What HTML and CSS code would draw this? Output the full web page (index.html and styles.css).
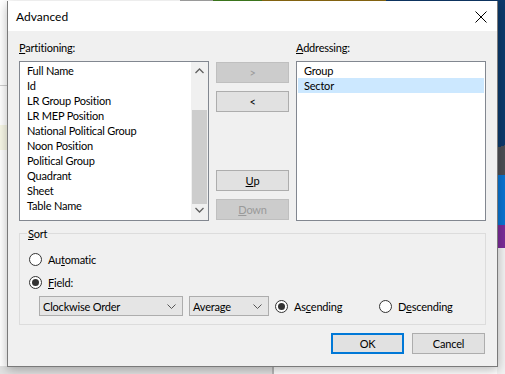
FILE: index.html
```html
<!DOCTYPE html>
<html>
<head>
<meta charset="utf-8">
<link rel="stylesheet" href="styles.css">
</head>
<body>
<div class="desktop">
  <div class="strip s-gray"></div>
  <div class="strip s-green"></div>
  <div class="strip s-gold"></div>
  <div class="strip s-navy"></div>
  <div class="side s-navy2"></div>
  <div class="side s-dark"></div>
  <div class="side s-blue"></div>
  <div class="side s-purple"></div>
  <div class="side s-light"></div>
  <div class="lline l1"></div>
  <div class="lband"></div>
  <div class="bottom-area"></div>
  <div class="bottom-line"></div>
  <div class="bottom-link">Default Table Calculation</div>

  <div class="dialog">
    <div class="titlebar">
      <span class="title">Advanced</span>
      <svg class="close" width="12" height="12" viewBox="0 0 12 12"><path d="M0.5 0.5 L11.5 11.5 M11.5 0.5 L0.5 11.5" stroke="#000" stroke-width="1" fill="none"/></svg>
    </div>
    <div class="body">
      <div class="lists">
        <div class="label"><u>P</u>artitioning:</div>
        <div></div>
        <div class="label"><u>A</u>ddressing:</div>

        <div class="listbox with-scroll">
          <div class="items">
            <div class="item">Full Name</div>
            <div class="item">Id</div>
            <div class="item">LR Group Position</div>
            <div class="item">LR MEP Position</div>
            <div class="item">National Political Group</div>
            <div class="item">Noon Position</div>
            <div class="item">Political Group</div>
            <div class="item">Quadrant</div>
            <div class="item">Sheet</div>
            <div class="item">Table Name</div>
          </div>
          <div class="scrollbar">
            <svg class="arrow" width="9" height="6" viewBox="0 0 9 6"><path d="M0.5 5 L4.5 1 L8.5 5" stroke="#606060" stroke-width="1.3" fill="none"/></svg>
            <div class="track"><div class="thumb"></div></div>
            <svg class="arrow" width="9" height="6" viewBox="0 0 9 6"><path d="M0.5 1 L4.5 5 L8.5 1" stroke="#606060" stroke-width="1.3" fill="none"/></svg>
          </div>
        </div>

        <div class="btncol">
          <div class="btn disabled">&gt;</div>
          <div class="btn">&lt;</div>
          <div class="spacer"></div>
          <div class="btn"><u>U</u>p</div>
          <div class="btn disabled"><u>D</u>own</div>
        </div>

        <div class="listbox">
          <div class="items">
            <div class="item">Group</div>
            <div class="item selected">Sector</div>
          </div>
        </div>
      </div>

      <div class="group">
        <div class="legend"><u>S</u>ort</div>
        <div class="row">
          <span class="radio"></span><span class="rlabel">Au<u>t</u>omatic</span>
        </div>
        <div class="row">
          <span class="radio checked"></span><span class="rlabel"><u>F</u>ield:</span>
        </div>
        <div class="row combos">
          <div class="combo wide"><span>Clockwise Order</span><svg width="9" height="5" viewBox="0 0 9 5"><path d="M0.5 0.5 L4.5 4.5 L8.5 0.5" stroke="#555" stroke-width="1" fill="none"/></svg></div>
          <div class="combo narrow"><span>Average</span><svg width="9" height="5" viewBox="0 0 9 5"><path d="M0.5 0.5 L4.5 4.5 L8.5 0.5" stroke="#555" stroke-width="1" fill="none"/></svg></div>
          <div class="opt asc"><span class="radio checked"></span><span class="rlabel">As<u>c</u>ending</span></div>
          <div class="opt"><span class="radio"></span><span class="rlabel">D<u>e</u>scending</span></div>
        </div>
      </div>

      <div class="footer">
        <div class="btn default">OK</div>
        <div class="btn">Cancel</div>
      </div>
    </div>
  </div>
</div>
</body>
</html>
```

FILE: styles.css
```css
html, body {
  margin: 0;
  padding: 0;
}
body {
  width: 505px;
  height: 374px;
  overflow: hidden;
  font-family: "Lato", "Noto Sans", sans-serif;
  font-size: 11px;
  letter-spacing: -0.2px;
  color: #000;
}
.desktop {
  position: relative;
  width: 505px;
  height: 374px;
  background: #ffffff;
  overflow: hidden;
}
.strip { position: absolute; top: 0; height: 1px; }
.s-gray { left: 180px; width: 33px; background: #a6a6a6; }
.s-green { left: 213px; width: 49px; background: #3f7d1f; }
.s-gold { left: 262px; width: 124px; background: #8c6a12; }
.s-navy { left: 386px; width: 119px; background: #0e3766; }
.side { position: absolute; left: 497px; width: 8px; }
.s-navy2 { top: 0; height: 135px; background: #0c3a6c; }
.s-dark { top: 135px; height: 40px; background: linear-gradient(160deg, #0c3a6c 0 30%, #4d4f55 30%); }
.s-blue { top: 175px; height: 50px; background: #0a74d2; }
.s-purple { top: 225px; height: 23px; background: #7b2c98; }
.s-light { top: 248px; height: 126px; background: #f2f2f2; }
.lline { position: absolute; left: 0; width: 7px; height: 1px; background: #cfcfcf; }
.l1 { top: 85px; }
.lband { position: absolute; left: 0; top: 125px; width: 7px; height: 25px; background: #f7f7e6; }
.bottom-area { position: absolute; left: 0; top: 366px; width: 272px; height: 8px; background: #e2e2e2; }
.bottom-line { position: absolute; left: 272px; top: 366px; width: 2px; height: 8px; background: #b9b9b9; }
.bottom-link {
  position: absolute;
  left: 112px;
  top: 354px;
  font-size: 13px;
  font-weight: bold;
  color: #2a2a9a;
  letter-spacing: 0.3px;
}

.dialog {
  position: absolute;
  left: 7px;
  top: 1px;
  width: 491px;
  height: 366px;
  box-sizing: border-box;
  border: 1px solid #7a7a7a;
  border-top: 0;
  background: #f0f0f0;
  box-shadow: 0 3px 10px rgba(0, 0, 0, 0.28);
  display: flex;
  flex-direction: column;
}
.titlebar {
  height: 30px;
  background: #ffffff;
  display: flex;
  align-items: center;
  justify-content: space-between;
  padding: 0 10px 0 8px;
  flex: none;
}
.title { font-size: 12px; letter-spacing: 0; line-height: 15px; margin-top: 1px; }
.close { display: block; margin-top: 1px; }
.body {
  flex: 1;
  padding: 9px 11px 0 11px;
}
.lists {
  display: grid;
  grid-template-columns: 190px 73px 190px;
  grid-template-rows: 15px 160px;
  column-gap: 7px;
  row-gap: 6px;
}
.label { line-height: 15px; }
.listbox {
  box-sizing: border-box;
  border: 1px solid #828790;
  background: #fff;
  padding: 1px;
  display: flex;
}
.items { flex: 1; }
.item {
  height: 15px;
  line-height: 15px;
  padding-left: 6px;
  white-space: nowrap;
}
.item.selected { background: #cce8ff; }
.with-scroll { padding-right: 0; }
.scrollbar {
  width: 17px;
  margin: -1px 0 -1px 0;
  background: #f0f0f0;
  display: flex;
  flex-direction: column;
  align-items: center;
}
.arrow { display: block; flex: none; margin: 6px 0 5px; }
.track {
  flex: 1;
  width: 15px;
  display: flex;
  flex-direction: column;
  justify-content: flex-end;
  padding-bottom: 3px;
}
.thumb { height: 94px; background: #cdcdcd; }
.scrollbar .arrow:last-child { margin: 0 0 7px; }

.btncol {
  display: flex;
  flex-direction: column;
  gap: 8px;
  padding: 1px 0;
}
.spacer { flex: 1; margin: -8px 0; }
.btn {
  box-sizing: border-box;
  height: 21px;
  width: 73px;
  border: 1px solid #adadad;
  background: #e1e1e1;
  display: flex;
  align-items: center;
  justify-content: center;
  line-height: 15px;
  flex: none;
}
.btn.disabled {
  background: #cccccc;
  border-color: #bfbfbf;
  color: #9a9a9a;
}
.btn.default {
  border: 2px solid #0078d7;
}

.group {
  position: relative;
  margin-top: 12px;
  height: 92px;
  box-sizing: border-box;
  border: 1px solid #dcdcdc;
  padding: 17px 9px 0 9px;
  display: flex;
  flex-direction: column;
  gap: 7px;
}
.legend {
  position: absolute;
  top: -8px;
  left: 7px;
  padding: 0 1px;
  background: #f0f0f0;
  line-height: 15px;
}
.row {
  display: flex;
  align-items: center;
  height: 16px;
}
.radio {
  box-sizing: border-box;
  width: 13px;
  height: 13px;
  border: 1px solid #333;
  border-radius: 50%;
  background: #fff;
  display: flex;
  align-items: center;
  justify-content: center;
  flex: none;
}
.radio.checked::after {
  content: "";
  width: 7px;
  height: 7px;
  border-radius: 50%;
  background: #333;
}
.rlabel { margin-left: 6px; line-height: 15px; white-space: nowrap; }
.row.combos {
  height: 20px;
  margin-top: -1px;
  padding-left: 10px;
  gap: 6px;
}
.combo {
  box-sizing: border-box;
  height: 20px;
  border: 1px solid #adadad;
  background: #e5e5e5;
  display: flex;
  align-items: center;
  justify-content: space-between;
  padding: 0 6px 0 3px;
  line-height: 15px;
}
.combo svg { display: block; }
.combo.wide { width: 144px; }
.combo.narrow { width: 80px; }
.opt { display: flex; align-items: center; }
.opt.asc { width: 98px; }

.footer {
  display: flex;
  justify-content: flex-end;
  gap: 8px;
  margin-top: 8px;
  padding-right: 1px;
}
```
